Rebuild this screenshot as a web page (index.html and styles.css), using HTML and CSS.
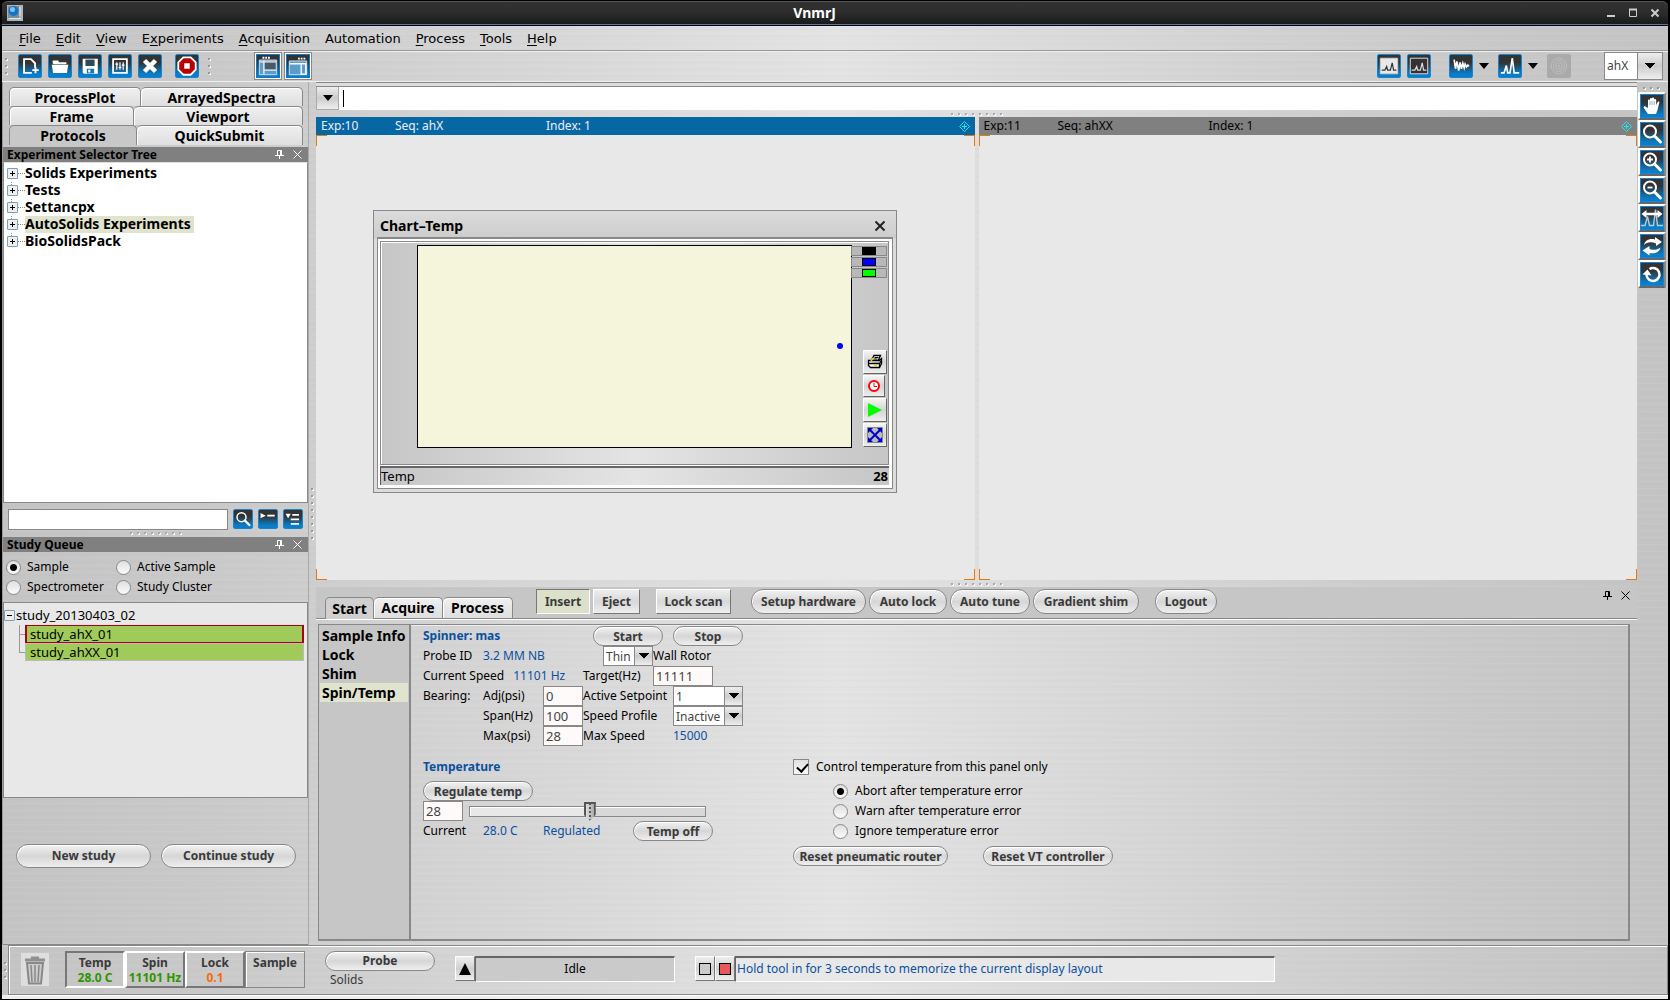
FILE: index.html
```html
<!DOCTYPE html>
<html lang="en">
<head>
<meta charset="utf-8">
<title>VnmrJ</title>
<link rel="stylesheet" href="styles.css">
</head>
<body>
<svg class="defs" aria-hidden="true">
  <symbol id="pin" viewBox="0 0 9 9"><path d="M2.500 5V.5h4V5M0 5.500h9M4.500 6v3M5.500 1v4" fill="none" stroke="currentColor"/></symbol>
  <symbol id="close" viewBox="0 0 9 9"><path d="M.5.5l8 8M8.500.5l-8 8" fill="none" stroke="currentColor"/></symbol>
  <symbol id="target" viewBox="0 0 11 11"><path d="M5.500.5l5 5-5 5-5-5zM5.500 3v5M3 5.500h5" fill="none" stroke="#1ee6f0"/></symbol>
  <symbol id="lens" viewBox="0 0 24 24"><circle cx="10" cy="9.500" r="6" fill="none" stroke="#fff" stroke-width="2"/><path d="M14.500 14l6 6" stroke="#fff" stroke-width="3" stroke-linecap="round"/></symbol>
</svg>
<div class="window">
  <header class="titlebar">
    <svg class="app-icon" viewBox="0 0 16 16"><rect width="16" height="16" fill="#aab4bb"/><rect x="1" y="1" width="11" height="12" fill="#7b8d99"/><circle cx="6.500" cy="6" r="5" fill="#1673c8"/><circle cx="5.500" cy="4.500" r="2.500" fill="#7cc4f5"/><path d="M2 13.500h12M13 2v9" stroke="#e8e8e8"/></svg>
    <h1>VnmrJ</h1>
    <div class="window-controls">
      <button aria-label="Minimize"><svg width="10" height="10"><path d="M1 8h8" stroke="#ccc" stroke-width="2"/></svg></button>
      <button aria-label="Maximize"><svg width="10" height="10"><path d="M1.500 1.500h7v7h-7z" fill="none" stroke="#ccc"/><path d="M1 1.500h8" stroke="#ccc" stroke-width="2"/></svg></button>
      <button aria-label="Close"><svg width="10" height="10"><path d="M1.500 1.500l7 7M8.500 1.500l-7 7" stroke="#ccc" stroke-width="2"/></svg></button>
    </div>
  </header>

  <nav class="menubar">
    <button><u>F</u>ile</button><button><u>E</u>dit</button><button><u>V</u>iew</button><button>E<u>x</u>periments</button><button><u>A</u>cquisition</button><button>Automation</button><button><u>P</u>rocess</button><button><u>T</u>ools</button><button><u>H</u>elp</button>
  </nav>

  <div class="toolbar">
    <i class="grip-v"></i>
    <div class="tools">
      <button class="ib" aria-label="New"><svg viewBox="0 0 24 24"><path d="M14 19.500H5.500v-15h7.500l4.500 4.500v5" fill="none" stroke="#fff" stroke-width="2"/><path d="M18 13v7M14.500 16.500h7" stroke="#fff" stroke-width="2"/></svg></button>
      <button class="ib" aria-label="Open"><svg viewBox="0 0 24 24"><path d="M4 9V6h6l1 2h8v2H5z" fill="#fff"/><path d="M3 10.500h18l-1.500 9h-15z" fill="#fff"/></svg></button>
      <button class="ib" aria-label="Save"><svg viewBox="0 0 24 24"><path d="M4 4h16.500v16.500h-15L4 19z" fill="#fff"/><path d="M7 5h10v7H7z" fill="#2b4a60"/><path d="M8.500 15h8v5h-8z" fill="#1273b5"/><path d="M10 16h2.500v3H10z" fill="#fff"/></svg></button>
      <button class="ib" aria-label="Parameters"><svg viewBox="0 0 24 24"><path d="M4.500 4.500h15v15h-15z" fill="none" stroke="#fff" stroke-width="2"/><path d="M8.500 8v8M12 8v8M15.500 8v8M7 10h3M10.500 13.500h3M14 11h3" stroke="#fff" stroke-width="1.300"/></svg></button>
      <button class="ib" aria-label="Cancel"><svg viewBox="0 0 24 24"><path d="M6 6l12 12M18 6L6 18" stroke="#fff" stroke-width="5"/></svg></button>
      <button class="ib stop" aria-label="Stop"><svg viewBox="0 0 24 24"><path d="M8 2.500h8L21.500 8v8L16 21.500H8L2.500 16V8z" fill="#b80000" stroke="#fff" stroke-width="2"/><path d="M9 9h6v6H9z" fill="#fff"/></svg></button>
      <i class="grip-v"></i>
    </div>
    <div class="toggles">
      <button class="ib on" aria-label="Left panel"><svg viewBox="0 0 24 24"><path d="M6 3h8" stroke="#fff" stroke-width="2" stroke-dasharray="2 1"/><path d="M2.500 5.500h19v16h-19z" fill="#5c9cc8" stroke="#dde8ee"/><path d="M8 7h12v9H8z" fill="#4a5a68"/><path d="M7.500 6v15M8 16.500h13M3 7.500h18" stroke="#e8f0f5" stroke-width="1.500"/></svg></button>
      <button class="ib on" aria-label="Top panel"><svg viewBox="0 0 24 24"><path d="M12 4h8" stroke="#fff" stroke-width="2" stroke-dasharray="2 1"/><path d="M2.500 6.500h19v15h-19z" fill="#5c9cc8" stroke="#dde8ee"/><path d="M3 9.500h18M15.500 10v11h5v-11" stroke="#fff" fill="none" stroke-width="1.500"/></svg></button>
    </div>
    <div class="display-tools">
      <button class="ib" aria-label="Light spectrum"><svg viewBox="0 0 24 24"><path d="M2.500 3.500h19v17h-19z" fill="#e8e8e8" stroke="#ccc"/><path d="M4 16.500h3.500l2-4 1 4h3l2-8 1.500 8h3" fill="none" stroke="#333" stroke-width="1.300"/></svg></button>
      <button class="ib" aria-label="Dark spectrum"><svg viewBox="0 0 24 24"><path d="M2.500 3.500h19v17h-19z" fill="#333" stroke="#e8e8e8"/><path d="M4 16.500h3.500l2-4 1 4h3l2-8 1.500 8h3" fill="none" stroke="#ddd" stroke-width="1.300"/></svg></button>
      <button class="ib apart" aria-label="FID"><svg viewBox="0 0 24 24"><path d="M4.500 5l1.500 10 1.500-8 2 10 1.500-9 1.500 7 1.500-6 1.500 5 1-4 1.500 3 1.500-2 1 1.500" fill="none" stroke="#fff" stroke-width="1.800"/></svg></button>
      <i class="arrow"></i>
      <button class="ib" aria-label="Spectrum"><svg viewBox="0 0 24 24"><path d="M2 19.500h3.500l2.500-8 1.500 8h2.500L14.500 3.500l2 16H22" fill="none" stroke="#fff" stroke-width="1.800"/></svg></button>
      <i class="arrow"></i>
      <button class="ib off" aria-label="Contour" disabled><svg viewBox="0 0 24 24" fill="none" stroke="#bebebe"><circle cx="12" cy="12" r="8.500"/><circle cx="12" cy="12" r="6"/><circle cx="12" cy="12" r="3.500"/><circle cx="12" cy="12" r="1"/></svg></button>
      <select class="combo workspace" aria-label="Workspace"><option>ahX</option></select>
    </div>
  </div>

  <div class="main">
    <aside class="left">
      <div class="vtabs">
        <div><button style="flex-basis:132px">ProcessPlot</button><button style="flex-basis:162px">ArrayedSpectra</button></div>
        <div><button style="flex-basis:125px">Frame</button><button style="flex-basis:169px">Viewport</button></div>
        <div><button class="sel" style="flex-basis:128px">Protocols</button><button style="flex-basis:166px">QuickSubmit</button></div>
      </div>
      <h2 class="bar">Experiment Selector Tree<svg><use href="#pin"/></svg><svg><use href="#close"/></svg></h2>
      <ul class="tree">
        <li><span>Solids Experiments</span></li>
        <li><span>Tests</span></li>
        <li><span>Settancpx</span></li>
        <li><span class="hl">AutoSolids Experiments</span></li>
        <li><span>BioSolidsPack</span></li>
      </ul>
      <div class="search">
        <input type="text" aria-label="Search">
        <button class="ib" aria-label="Find"><svg viewBox="0 0 24 24"><use href="#lens"/></svg></button>
        <button class="ib" aria-label="Collapse"><svg viewBox="0 0 24 24"><path d="M2 4l7 3.500L2 11z" fill="#fff"/><path d="M11 7.500h10" stroke="#fff" stroke-width="2.500"/></svg></button>
        <button class="ib" aria-label="Expand"><svg viewBox="0 0 24 24"><path d="M2 5h7l-3.500 6z" fill="#fff"/><path d="M11 6.500h9M9 12.500h11M9 18.500h11" stroke="#fff" stroke-width="2.500"/></svg></button>
      </div>
      <i class="grip-h short"></i>
      <h2 class="bar">Study Queue<svg><use href="#pin"/></svg><svg><use href="#close"/></svg></h2>
      <div class="queue-radios">
        <label><input type="radio" name="queue" checked>Sample</label>
        <label><input type="radio" name="queue">Active Sample</label>
        <label><input type="radio" name="queue">Spectrometer</label>
        <label><input type="radio" name="queue">Study Cluster</label>
      </div>
      <div class="study">
        <p>study_20130403_02</p>
        <ul><li class="active">study_ahX_01</li><li>study_ahXX_01</li></ul>
      </div>
      <div class="study-actions">
        <button class="pill">New study</button>
        <button class="pill">Continue study</button>
      </div>
    </aside>
    <i class="splitter"></i>

    <main class="center">
      <div class="command">
        <button aria-label="History"><i class="arrow"></i></button>
        <input type="text" aria-label="Command">
      </div>
      <i class="grip-h"></i>
      <div class="viewports">
        <section class="viewport active">
          <header><span>Exp:10</span><span>Seq: ahX</span><span>Index: 1</span><svg><use href="#target"/></svg></header>
          <div class="canvas">
            <div class="dialog">
              <header><h2>Chart–Temp</h2><button aria-label="Close"><svg width="12" height="12"><path d="M1.500 1.500l9 9M10.500 1.500l-9 9" stroke="#222" stroke-width="2"/></svg></button></header>
              <div class="dialog-body">
                <div class="chart">
                  <svg class="plot" viewBox="0 0 433 201" preserveAspectRatio="none"><circle cx="422" cy="100" r="3" fill="#00f"/></svg>
                  <div class="chart-side">
                    <ul class="legend"><li class="black"></li><li class="blue"></li><li class="green"></li></ul>
                    <div class="chart-tools">
                      <button aria-label="Print"><svg viewBox="0 0 16 16"><path d="M4.500 6L7 1.500h6.500L11.500 6M1.500 6.500h11l2-2v5l-2 4h-9l-2-2zM1.500 9.500h11l2-3M12.500 9.500v4" fill="#fff" stroke="#000" stroke-width="1.300"/><path d="M7.500 3.500h4M6.500 5h4" stroke="#000"/><path d="M7 11.500h3M4 7l2-3" stroke="#e8d800" stroke-width="1.500"/></svg></button>
                      <button class="slim" aria-label="Time"><svg viewBox="0 0 16 16"><circle cx="8" cy="8" r="5" fill="#fff" stroke="#f00" stroke-width="2"/><path d="M8 5v3.500h3" fill="none" stroke="#f00"/></svg></button>
                      <button aria-label="Run"><svg viewBox="0 0 16 16"><path d="M1 1l14 7-14 7z" fill="#0f0"/></svg></button>
                      <button aria-label="Fit"><svg viewBox="0 0 16 16"><path d="M.5.5h15v15H.5z" fill="#bbb" stroke="#888"/><path d="M3 3l10 10M13 3L3 13" stroke="#00c" stroke-width="2"/><path d="M1 1h5L1 6zM15 1v5l-5-5zM1 15v-5l5 5zM15 15h-5l5-5z" fill="#00c"/></svg></button>
                    </div>
                  </div>
                </div>
                <div class="reading"><span>Temp</span><b>28</b></div>
              </div>
            </div>
          </div>
        </section>
        <section class="viewport">
          <header><span>Exp:11</span><span>Seq: ahXX</span><span>Index: 1</span><svg><use href="#target"/></svg></header>
          <div class="canvas"></div>
        </section>
      </div>
      <i class="grip-h"></i>

      <section class="params">
        <div class="params-head">
          <div class="htabs"><button class="sel" style="width:49px">Start</button><button style="width:69px">Acquire</button><button style="width:70px">Process</button></div>
          <div class="actions">
            <button class="flat pressed" style="width:54px">Insert</button>
            <button class="flat eject" style="width:47px">Eject</button>
            <button class="flat scan" style="width:75px">Lock scan</button>
            <button class="pill" style="width:115px">Setup hardware</button>
            <button class="pill" style="width:78px">Auto lock</button>
            <button class="pill" style="width:80px">Auto tune</button>
            <button class="pill" style="width:106px">Gradient shim</button>
            <button class="pill logout" style="width:62px">Logout</button>
          </div>
          <div class="panel-icons"><svg><use href="#pin"/></svg><svg><use href="#close"/></svg></div>
        </div>
        <div class="params-body">
          <ul class="pages"><li>Sample Info</li><li>Lock</li><li>Shim</li><li class="hl">Spin/Temp</li></ul>
          <div class="page">
            <div class="form">
              <h3 class="c1">Spinner: mas</h3><button class="pill c5" style="width:70px">Start</button><button class="pill c8" style="width:70px">Stop</button>
              <span class="c1">Probe ID</span><span class="c2 val">3.2 MM NB</span>
              <select class="combo c6" id="rotor" style="width:50px"><option>Thin</option></select><label class="c7" for="rotor">Wall Rotor</label>
              <span class="c1 pair">Current Speed <span class="val">11101 Hz</span></span><label class="c4" for="target-hz">Target(Hz)</label><input class="c7" id="target-hz" type="text" value="11111" style="width:60px">
              <span class="c1">Bearing:</span><label class="c2" for="adj">Adj(psi)</label><input class="c3" id="adj" type="text" value="0"><label class="c4" for="setpoint">Active Setpoint</label><select class="combo c8" id="setpoint" style="width:70px"><option>1</option></select>
              <label class="c2" for="span">Span(Hz)</label><input class="c3" id="span" type="text" value="100"><label class="c4" for="profile">Speed Profile</label><select class="combo c8" id="profile" style="width:70px"><option>Inactive</option></select>
              <label class="c2" for="max">Max(psi)</label><input class="c3" id="max" type="text" value="28"><span class="c4">Max Speed</span><span class="c8 val">15000</span>
            </div>
            <div class="form temp">
              <h3 class="c1">Temperature</h3>
              <button class="pill c1" style="width:110px">Regulate temp</button>
              <div class="c1 slide"><input type="text" value="28" aria-label="Temperature"><input type="range" min="0" max="100" value="51" aria-label="Temperature setting"></div>
              <span class="c1">Current</span><span class="c2 val">28.0 C</span><span class="c3 val">Regulated</span><button class="pill temp-off" style="width:80px">Temp off</button>
            </div>
            <div class="safety">
              <label><input type="checkbox" checked>Control temperature from this panel only</label>
              <div class="choices">
                <label><input type="radio" name="err" checked>Abort after temperature error</label>
                <label><input type="radio" name="err">Warn after temperature error</label>
                <label><input type="radio" name="err">Ignore temperature error</label>
              </div>
              <div class="resets"><button class="pill" style="width:155px">Reset pneumatic router</button><button class="pill" style="width:130px">Reset VT controller</button></div>
            </div>
          </div>
        </div>
      </section>
    </main>

    <div class="side-tools">
      <i class="dots"></i>
      <button class="ib" aria-label="Pan"><svg viewBox="0 0 24 24"><path d="M8 20l-4.500-6.500 1-1.500 3.500 2V6.500c0-1.500 2-1.500 2 0V5c0-1.500 2-1.500 2 0v-.5c0-1.500 2.200-1.500 2.200 0V6c0-1.300 2-1.300 2 0v5l1.500-3c.8-1 2-.3 1.600.8L17.500 16 16 20z" fill="#fff"/><path d="M10 7v4M12 7v4M14.200 7v4" stroke="#456" stroke-width=".5"/></svg></button>
      <button class="ib" aria-label="Zoom"><svg viewBox="0 0 24 24"><use href="#lens"/></svg></button>
      <button class="ib" aria-label="Zoom in"><svg viewBox="0 0 24 24"><use href="#lens"/><path d="M7 9.500h6M10 6.500v6" stroke="#fff" stroke-width="1.800"/></svg></button>
      <button class="ib" aria-label="Zoom out"><svg viewBox="0 0 24 24"><use href="#lens"/><path d="M7.500 9.500h5" stroke="#fff" stroke-width="1.800"/></svg></button>
      <button class="ib" aria-label="Stretch"><svg viewBox="0 0 24 24"><path d="M1 19.500h4l2.500-9 2 9h4l2-16 2 16H23" fill="none" stroke="#b5cbd8" stroke-width="1.400"/><path d="M6 8h12" stroke="#fff" stroke-width="2.500"/><path d="M1.500 8l5-4v8zM22.500 8l-5-4v8z" fill="#fff"/></svg></button>
      <button class="ib" aria-label="Swap"><svg viewBox="0 0 24 24"><path d="M4 11c1-5 6-7 11-5.500V3l7 5-6 4V9.500C11 7.500 7 8 4 11zM20.500 13.500c-1 5-6 6.500-11 5.500v2.500l-7-5 7-4.500V15c4 1.500 8 1 11-1.500z" fill="#fff"/></svg></button>
      <button class="ib" aria-label="Undo"><svg viewBox="0 0 24 24"><path d="M6.500 13a6.500 6.500 0 1 0 3-6" fill="none" stroke="#fff" stroke-width="2.500"/><path d="M2.500 12.500l5-5 4 6z" fill="#fff"/></svg></button>
    </div>
  </div>

  <footer class="status">
    <i class="grip-v"></i>
    <div class="status-box">
      <svg class="trash" viewBox="0 0 28 33"><path d="M0 0h28v33H0z" fill="#dedede"/><path d="M4 7h20M10 5h8" stroke="#909090" stroke-width="3"/><path d="M6 10h16l-2 20.500H8z" fill="#ccc" stroke="#888" stroke-width="2"/><path d="M10 12l1 17M14 12v17M18 12l-1 17" stroke="#888" stroke-width="1.500"/></svg>
      <div class="cells">
        <button class="in">Temp<span class="ok">28.0 C</span></button>
        <button class="out">Spin<span class="ok">11101 Hz</span></button>
        <button class="out">Lock<span class="warn">0.1</span></button>
        <button class="line">Sample</button>
      </div>
      <div class="probe"><button class="pill">Probe</button><span>Solids</span></div>
      <div class="idle"><button class="sq" aria-label="Status"><svg width="12" height="12"><path d="M6 0l6 12H0z"/></svg></button><output>Idle</output></div>
      <div class="message"><button class="sq" aria-label="Clear"><i></i></button><button class="sq red" aria-label="Errors"><i></i></button><output>Hold tool in for 3 seconds to memorize the current display layout</output></div>
    </div>
  </footer>
</div>
</body>
</html>
```
FILE: styles.css
```css
* { box-sizing: border-box; }
body { margin: 0; background: #000; color: #000; font: 12px/16px "Noto Sans", sans-serif; }
h1, h2, h3, p, ul { margin: 0; padding: 0; }
ul { list-style: none; }
button, input, select { font: inherit; color: inherit; margin: 0; padding: 0; border: 0; background: none; border-radius: 0; outline: 0; }
button { white-space: nowrap; }
svg { display: block; flex: none; }
.defs { position: absolute; width: 0; height: 0; }

.window {
  min-height: 100vh; display: flex; flex-direction: column;
  border: 1px solid #000; border-width: 0 2px 1px;
}

.titlebar {
  height: 26px; display: flex; align-items: center; justify-content: space-between;
  padding: 0 8px 0 5px; color: #fff; border-top: 1px solid #000; border-bottom: 1px solid #000;
  box-shadow: inset 0 1px #555, inset 0 -1px #5478a8; border-radius: 6px 6px 0 0;
  background: linear-gradient(#333, #2c2c2c 50%, #181818);
}
.titlebar h1 { font-size: 14px; line-height: 18px; font-weight: bold; }
.app-icon { width: 16px; height: 16px; }
.window-controls { display: flex; gap: 12px; }

.menubar, .toolbar, .main, .status {
  background:
    repeating-linear-gradient(rgba(255,255,255,.06) 0 1px, transparent 1px 3px, rgba(0,0,0,.01) 3px 4px, transparent 4px 7px),
    linear-gradient(90deg, #c4c4c4, #c9c9c9 12%, #e3e3e3 50%, #c9c9c9 88%, #c4c4c4);
}
.menubar { height: 25px; display: flex; align-items: center; gap: 15px; padding: 2px 0 0 17px; font-family: "DejaVu Sans", sans-serif; font-size: 13px; border-bottom: 1px solid #999; }
.menubar u { text-underline-offset: 2px; }

.toolbar { height: 31px; display: flex; align-items: center; border-top: 1px solid #eee; border-bottom: 1px solid #eee; padding: 0 5px 1px 3px; }
.tools { display: flex; gap: 6px; align-items: center; margin-left: 10px; }
.tools .stop { margin-left: 7px; }
.tools .grip-v { margin-left: 3px; }
.toggles { display: flex; gap: 2px; margin-left: 43px; }
.display-tools { display: flex; align-items: center; margin-left: auto; gap: 6px; }
.display-tools .apart { margin-left: 12px; }
.display-tools .arrow { margin: 0 3px 0 0; }

.ib {
  width: 24px; height: 24px; border: 1px solid #1486d4; border-radius: 2px; flex: none;
  background: linear-gradient(#333 35%, #0a7dc8 85%); display: grid; place-items: center;
}
.ib svg { width: 22px; height: 22px; }
.ib.on { width: 28px; height: 28px; border: 0; box-shadow: inset 0 0 0 1px #888, inset 0 0 0 2px #fff, inset 0 0 0 3px #0a7dc8; border-radius: 0; }
.ib.off { background: #aaa; border-color: #aaa; }
.arrow { width: 0; height: 0; border: 5px solid transparent; border-top: 6px solid #000; border-bottom: 0; display: block; }

.grip-v { width: 3px; height: 17px; background: linear-gradient(#999 2px, transparent 2px) 0 0 / 2px 7px repeat-y, linear-gradient(#fff 2px, transparent 2px) 1px 1px / 2px 7px repeat-y; }
.grip-h { flex: none; height: 7px; width: 52px; align-self: center; background: linear-gradient(90deg, #aaa 2px, transparent 2px) 0 3px / 7px 2px repeat-x, linear-gradient(90deg, #fff 2px, transparent 2px) 1px 4px / 7px 2px repeat-x; }
.grip-h.short { height: 6px; background-position: 0 1px, 1px 2px; }

.main { flex: 1; display: flex; align-items: stretch; }

/* left column */
.left { width: 306px; display: flex; flex-direction: column; border-left: 1px solid #999; }
.vtabs { padding: 5px 5px 2px 6px; }
.vtabs div { display: flex; height: 19px; }
.vtabs div:nth-child(3) { height: 20px; }
.vtabs button, .htabs button {
  font-weight: bold; font-size: 14px; line-height: 20px; border: 1px solid #888; border-bottom: 0;
  border-radius: 5px 5px 0 0; background: linear-gradient(#f0f0f0, #dedede);
  box-shadow: inset 1px 1px #fff;
}
.vtabs button { flex-grow: 1; }
.vtabs button + button { border-left-width: 0; }
.vtabs .sel, .htabs .sel { background: #c8c8c8; box-shadow: none; }
.bar { height: 15px; flex: none; background: #808080; font-size: 12px; line-height: 15px; display: flex; align-items: center; padding: 0 6px 0 4px; color: #000; }
.bar svg { width: 9px; height: 9px; color: #fff; margin-left: 9px; }
.bar svg:first-of-type { margin-left: auto; }
.tree { flex: 341 1 341px; background: #fff; border: 1px solid #888; border-top-color: #ddd; padding: 2px 0 0 3px; font-size: 14px; line-height: 17px; font-weight: bold; }
.tree li { display: flex; height: 17px; align-items: center; }
.tree li::before, .study p::before {
  content: ""; width: 9px; height: 9px; border: 1px solid #7d9db8; border-radius: 1px; flex: none;
  background: linear-gradient(#000, #000) center / 5px 1px no-repeat, linear-gradient(#000, #000) center / 1px 5px no-repeat, #eee;
}
.tree li::after { content: ""; order: 1; width: 7px; border-top: 1px dotted #888; }
.tree li + li { background: repeating-linear-gradient(#888 0 1px, transparent 1px 2px) 4px 0 / 1px 4px no-repeat; }
.tree span { order: 2; height: 17px; line-height: 16px; padding-right: 3px; }
.hl { background: #e0e3cd; }
.search { display: flex; align-items: center; gap: 5px; height: 28px; padding: 4px 5px 0; flex: none; }
.search input { flex: 1; height: 21px; min-width: 0; background: #fff; border: 1px solid #888; }
.search .ib { width: 20px; height: 20px; }
.search .ib svg { width: 18px; height: 18px; }

input[type=radio], input[type=checkbox] { appearance: none; width: 15px; height: 15px; border: 1px solid #888; border-radius: 50%; background: linear-gradient(#e0e0e0, #fafafa); flex: none; }
input[type=radio]:checked { background: radial-gradient(circle, #000 3px, transparent 4px), linear-gradient(#e0e0e0, #fafafa); }
input[type=checkbox] { width: 16px; height: 16px; border-radius: 0; }
input[type=checkbox]:checked::before { content: ""; display: block; width: 5px; height: 9px; margin: 1px 0 0 5px; border: solid #000; border-width: 0 2px 2px 0; transform: rotate(42deg); }
.queue-radios { display: grid; grid-template-columns: 110px 1fr; grid-auto-rows: 20px; padding: 5px 3px; height: 50px; flex: none; }
.queue-radios label { display: flex; align-items: center; gap: 6px; white-space: nowrap; }
.study { flex: 196 1 196px; border: 1px solid #888; background: #e8e8e8; padding: 3px 3px 0 1px; font-size: 13px; }
.study p { display: flex; align-items: center; gap: 1px; height: 18px; margin: 0 0 1px -1px; }
.study p::before { background: linear-gradient(#000, #000) center / 5px 1px no-repeat, #eee; }
.study ul { padding-left: 20px; background: linear-gradient(#999, #999) 14px 0 / 1px 27px no-repeat, linear-gradient(#999, #999) 14px 9px / 6px 1px no-repeat, linear-gradient(#999, #999) 14px 27px / 6px 1px no-repeat; }
.study li { height: 18px; line-height: 16px; background: #a0cb5a; border: 1px solid #bbb; padding-left: 4px; }
.study li.active { border: 1px solid #b00010; border-width: 1px 2px; padding-left: 3px; }
.study-actions { flex: 147 1 147px; display: flex; gap: 10px; padding: 46px 12px 0 13px; border-bottom: 1px solid #888; }
.study-actions .pill { flex: 1; height: 24px; }
.splitter { width: 8px; flex: none; border-left: 1px solid #aaa; display: grid; place-items: center; }
.splitter::before { content: ""; width: 3px; height: 52px; background: linear-gradient(#999 2px, transparent 2px) 0 0 / 2px 7px repeat-y, linear-gradient(#fff 2px, transparent 2px) 1px 1px / 2px 7px repeat-y; }

.pill { height: 20px; font-weight: bold; color: #3a3a3a; border: 1px solid #888; border-radius: 12px; background: linear-gradient(#f2f2f2, #d6d6d6 50%, #eee); box-shadow: inset 1px 1px #fff; }

/* centre column */
.center { flex: 1; min-width: 0; display: flex; flex-direction: column; }
.command { display: flex; height: 28px; border-top: 1px solid #888; box-shadow: inset 0 3px #ddd, inset 0 4px #888; padding-top: 4px; flex: none; }
.command button { width: 23px; display: grid; place-items: center; border: 1px solid #aaa; border-top: 0; background: linear-gradient(#eee, #ccc 50%, #eee); }
.command input { flex: 1; background: linear-gradient(#000, #000) 4px 3px / 1px 17px no-repeat, #fff; }
.viewports { display: flex; gap: 4px; flex: 463 1 463px; }
.viewport { flex: 1; display: flex; flex-direction: column; min-width: 0; }
.viewport > header { height: 18px; background: #808080; display: grid; grid-template-columns: 74px 151px 1fr auto; align-items: center; padding: 0 5px; line-height: 18px; }
.viewport.active > header { background: #0667a3; color: #eef; }
.viewport > header svg { width: 11px; height: 11px; }
.canvas {
  --o: linear-gradient(#e07b10, #e07b10);
  flex: 1; position: relative;
  background: var(--o) 0 0 / 11px 1px, var(--o) 0 0 / 1px 11px, var(--o) 100% 0 / 11px 1px, var(--o) 100% 0 / 1px 11px,
    var(--o) 0 100% / 11px 1px, var(--o) 0 100% / 1px 11px, var(--o) 100% 100% / 11px 1px, var(--o) 100% 100% / 1px 11px, #e8e8e8;
  background-repeat: no-repeat;
}

.dialog { position: absolute; left: 57px; top: 75px; width: 524px; height: 283px; border: 1px solid #888; padding: 0 3px 3px; background: linear-gradient(#dcdcdc, #ccc 27px, #dcdcdc 28px); display: flex; flex-direction: column; }
.dialog header { height: 26px; display: flex; align-items: center; justify-content: space-between; padding: 3px 7px 0 3px; flex: none; }
.dialog h2 { font-size: 14px; line-height: 18px; }
.dialog-body { flex: 1; border: 1px solid #888; border-top-width: 2px; padding: 2px 3px 3px 2px; background: #fff; display: flex; flex-direction: column; gap: 1px; }
.chart, .reading { background: linear-gradient(90deg, #c6c6c6, #e4e4e4 50%, #c6c6c6); }
.chart { flex: 1; border: 1px solid #888; box-shadow: inset 1px 1px #fff; display: flex; align-items: flex-start; padding: 3px 1px 0 36px; }
.plot { flex: 1; border: 1px solid #000; background: #f5f5dc; height: 203px; }
.chart-side { width: 35px; height: 203px; display: flex; flex-direction: column; justify-content: space-between; }
.legend { margin-left: -1px; padding-top: 1px; }
.legend li { height: 10px; margin-bottom: 1px; border: 1px solid #888; background: #b8b8b8; display: grid; place-items: center; }
.legend li::before { content: ""; width: 12px; height: 6px; border: 1px solid #000; background: #000; }
.legend .blue::before { background: #00f; }
.legend .green::before { background: #0f0; }
.chart-tools { align-self: flex-end; width: 24px; }
.chart-tools button { width: 24px; height: 24px; margin-bottom: 1px; display: grid; place-items: center; border: 1px solid #fff; border-right-color: #666; border-bottom-color: #666; background: linear-gradient(#f4f4f4, #d4d4d4 50%, #eee); }
.chart-tools button.slim { width: 22px; height: 22px; }
.chart-tools svg { width: 16px; height: 16px; }
.reading { height: 19px; display: flex; justify-content: space-between; border-top: 2px solid #666; border-left: 1px solid #555; padding-right: 1px; font-size: 13px; line-height: 16px; }

.params { flex: 358 1 358px; display: flex; flex-direction: column; padding: 0 7px 4px 2px; }
.params-head { display: flex; height: 32px; background: #c6c6c6; margin: 0 -7px 0 -2px; padding: 0 7px 0 9px; border-bottom: 1px solid #888; box-shadow: 0 1px #fff; flex: none; }
.htabs { display: flex; align-items: flex-end; }
.htabs button { height: 21px; }
.htabs button + button { border-left-width: 0; }
.htabs .sel { height: 22px; background: #d0d0d0; margin-bottom: -1px; }
.actions { display: flex; gap: 3px; margin-left: 23px; padding-top: 2px; }
.actions button { height: 25px; }
.flat { font-weight: bold; color: #3a3a3a; border: 1px solid #fff; border-right-color: #777; border-bottom-color: #777; background: linear-gradient(#eee, #d8d8d8 50%, #eee); }
.pressed { background: #dcdfca; border-color: #777 #fff #fff #777; }
.scan { margin-left: 13px; margin-right: 17px; }
.logout { margin-left: 13px; }
.panel-icons { margin-left: auto; display: flex; gap: 9px; padding: 4px 0; }
.panel-icons svg { width: 9px; height: 9px; }
.params-body { flex: 1; display: flex; margin-top: 5px; border: 1px solid #888; border-right-width: 2px; border-bottom-width: 2px; box-shadow: inset 1px 1px #eee; }
.pages { width: 92px; border-right: 2px solid #888; background: #c6c6c6; padding: 1px; font-size: 14px; line-height: 19px; font-weight: bold; white-space: nowrap; }
.pages li { height: 19px; padding-left: 2px; }
.page { flex: 1; display: grid; grid-template-columns: 320px 1fr; grid-template-rows: 120px auto; column-gap: 50px; row-gap: 11px; padding: 1px 12px; align-content: start; }
.form { display: grid; grid-template-columns: 60px 60px 40px 10px 10px 50px 20px 70px; grid-auto-rows: 20px; line-height: 20px; white-space: nowrap; grid-column: 1; }
.form > * { overflow: visible; width: 0; }
.c1 { grid-column: 1; } .c2 { grid-column: 2; } .c3 { grid-column: 3; } .c4 { grid-column: 4; } .c5 { grid-column: 5; }
.c6 { grid-column: 6; } .c7 { grid-column: 7; } .c8 { grid-column: 8; }
.temp-off { grid-column: 6; margin-left: 30px; }
.form h3 { font-size: 12px; line-height: 20px; color: #0b50a0; }
.val { color: #0b50a0; }
.pair { display: flex; gap: 9px; }
.form input[type=text] { height: 20px; width: 40px; border: 1px solid #888; background: #fffafa; color: #444; padding: 0 2px; font-size: 13px; flex: none; }
.combo {
  appearance: none; height: 20px; border: 1px solid #888; color: #444; padding-left: 2px;
  background-color: #fff; background-repeat: no-repeat;
  background-image: linear-gradient(to bottom left, #000 50%, transparent 51%), linear-gradient(to bottom right, #000 50%, transparent 51%), linear-gradient(#888, #888), linear-gradient(#eee, #ccc 50%, #eee);
  background-position: right 8px center, right 3px center, right 17px top, right top;
  background-size: 5px 6px, 5px 6px, 1px 100%, 17px 100%;
}
.workspace { width: 59px; height: 28px; margin-left: 27px; background-position: right 12px center, right 7px center, right 24px top, right top; background-size: 5px 6px, 5px 6px, 1px 100%, 24px 100%; }
.temp { grid-template-rows: 24px 20px 20px 20px; }
.slide { display: flex; align-items: center; gap: 6px; }
.slide input[type=range] { appearance: none; width: 237px; height: 20px; flex: none; }
.slide input::-webkit-slider-runnable-track { height: 11px; border: 1px solid #888; background: linear-gradient(90deg, #e8e8e8 50%, #d8d8d8 50%); box-shadow: inset 1px 1px #fff; }
.slide input::-webkit-slider-thumb {
  appearance: none; width: 12px; height: 19px; margin-top: -5px; border: 0; border-radius: 0;
  background:
    linear-gradient(#555, #555) 0 0 / 100% 2px no-repeat,
    linear-gradient(#555 2px, transparent 2px) 5px 5px / 2px 4px repeat-y,
    linear-gradient(90deg, #555 0 2px, #ddd 2px, #aaa 10px, #555 10px);
  clip-path: polygon(0 0, 100% 0, 100% 70%, 50% 100%, 0 70%);
}
.safety { grid-column: 2; display: flex; flex-direction: column; line-height: 20px; white-space: nowrap; }
.safety label { display: flex; align-items: center; gap: 7px; height: 20px; }
.choices { padding: 4px 0 0 40px; }
.resets { display: flex; gap: 35px; padding-top: 5px; }

/* right tool strip */
.side-tools { width: 31px; padding: 2px 2px 0 0; flex: none; display: flex; flex-direction: column; align-items: center; }
.dots { width: 17px; height: 8px; background: linear-gradient(90deg, #999 2px, transparent 2px) 0 3px / 7px 2px repeat-x, linear-gradient(90deg, #fff 2px, transparent 2px) 1px 4px / 7px 2px repeat-x; }
.side-tools .ib { width: 28px; height: 28px; border: 2px solid #fff; border-right-color: #888; border-bottom-color: #666; box-shadow: inset 0 0 0 1px #1486d4; background-clip: padding-box; }
.side-tools .ib svg { width: 24px; height: 24px; }

/* status bar */
.status { display: flex; align-items: center; height: 54px; border-bottom: 4px solid #eee; flex: none; }
.status .grip-v { margin: 0 1px 0 2px; }
.status-box { flex: 1; height: 50px; display: flex; align-items: center; border: 1px solid #888; box-shadow: inset 1px 1px #fff, 0 1px #fff; padding: 0 0 2px 12px; }
.trash { width: 28px; height: 33px; }
.cells { display: flex; margin-left: 16px; }
.cells button { width: 60px; height: 37px; font-weight: bold; color: #3a3a3a; line-height: 15px; display: flex; flex-direction: column; align-items: center; justify-content: flex-start; padding-top: 2px; overflow: hidden; border: 2px solid; }
.cells .in { border-color: #777 #fff #fff #777; }
.cells .out { border-color: #fff #777 #777 #fff; }
.cells .line { border: 1px solid #888; box-shadow: inset 1px 1px #fff; padding-top: 3px; }
.ok { color: #2e9500; } .warn { color: #f76b0a; }
.probe { margin-left: 20px; width: 110px; display: flex; flex-direction: column; color: #3a3a3a; }
.probe span { padding: 1px 5px 0; }
.idle, .message { display: flex; margin-left: 20px; height: 26px; }
.sq { width: 20px; height: 25px; border: 1px solid #fff; border-right-color: #777; border-bottom-color: #777; background: linear-gradient(#eee, #d0d0d0 50%, #eee); display: grid; place-items: center; }
.sq i { width: 12px; height: 12px; border: 1px solid #000; background: #ccc; }
.sq.red i { background: #e85a5a; }
output { border: 1px solid #fff; border-top: 2px solid #666; border-left: 1px solid #666; line-height: 22px; white-space: nowrap; height: 26px; }
.idle output { width: 200px; background: #cacaca; text-align: center; }
.message output { width: 540px; background: #e8e8e8; color: #0b50a0; padding-left: 1px; }
```
